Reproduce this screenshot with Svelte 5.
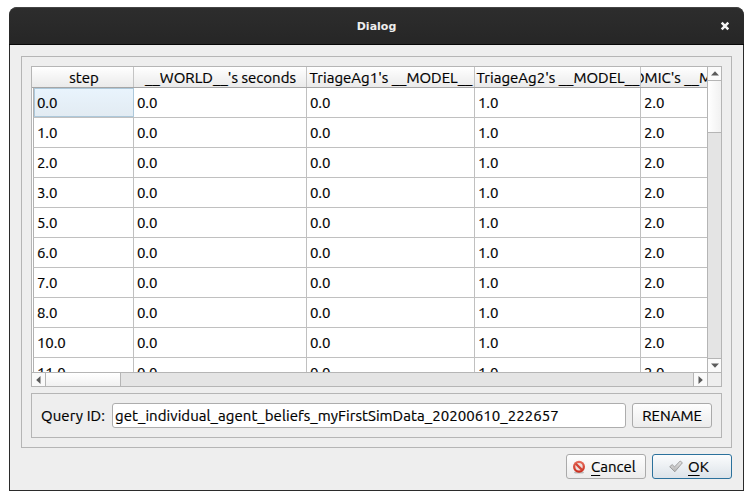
<script>
  const columns = [
    { label: 'step', width: 100, cls: 'step' },
    { label: "__WORLD__'s seconds", width: 173, cls: 'world' },
    { label: "TriageAg1's __MODEL__", width: 168, cls: 'triage' },
    { label: "TriageAg2's __MODEL__", width: 166, cls: 'triage' },
    { label: "ATOMIC's __MODEL__", width: 103, cls: 'atomic' }
  ];
  const steps = ['0.0', '1.0', '2.0', '3.0', '5.0', '6.0', '7.0', '8.0', '10.0', '11.0'];
  const rows = steps.map((s) => [s, '0.0', '0.0', '1.0', '2.0']);
</script>

<div class="window">
  <header class="titlebar">
    <span class="title">Dialog</span>
    <svg class="close" width="10" height="10" viewBox="0 0 10 10"><path d="M1.7 1.7 8.3 8.3M8.3 1.7 1.7 8.3" stroke="#f4f4f4" stroke-width="2.5" /></svg>
  </header>
  <main>
    <section class="group">
      <div class="table">
        <div class="upper">
          <div class="viewport">
            <div class="head">
              {#each columns as c}
                <div class="th" style="width:{c.width}px"><span class={c.cls}>{c.label}</span></div>
              {/each}
            </div>
            <div class="body">
              {#each rows as row, r}
                <div class="row">
                  {#each row as value, i}
                    <div class="td" class:current={r === 0 && i === 0} style="width:{columns[i].width}px">{value}</div>
                  {/each}
                </div>
              {/each}
            </div>
          </div>
          <div class="vscroll">
            <div class="arrow up"><svg width="8" height="5" viewBox="0 0 8 5"><path d="M0 4.5 4 0.2 8 4.5z" fill="#5a5a5a" /></svg></div>
            <div class="vthumb"></div>
            <div class="track"></div>
            <div class="arrow down"><svg width="8" height="5" viewBox="0 0 8 5"><path d="M0 0.5 4 4.8 8 0.5z" fill="#5a5a5a" /></svg></div>
          </div>
        </div>
        <div class="hscroll">
          <div class="arrow left"><svg width="5" height="8" viewBox="0 0 5 8"><path d="M4.5 0 0.2 4 4.5 8z" fill="#5a5a5a" /></svg></div>
          <div class="hthumb"></div>
          <div class="track"></div>
          <div class="arrow right"><svg width="5" height="8" viewBox="0 0 5 8"><path d="M0.5 0 4.8 4 0.5 8z" fill="#5a5a5a" /></svg></div>
          <div class="corner"></div>
        </div>
      </div>
      <div class="query">
        <span class="label">Query ID:</span>
        <div class="field"><span>get_individual_agent_beliefs_myFirstSimData_20200610_222657</span></div>
        <button class="btn rename"><span>RENAME</span></button>
      </div>
    </section>
    <footer>
      <button class="btn cancel">
        <svg width="14" height="14" viewBox="0 0 14 14">
          <defs><linearGradient id="red" x1="0" y1="0" x2="0" y2="1"><stop offset="0" stop-color="#e8705f" /><stop offset="1" stop-color="#c92a1b" /></linearGradient></defs>
          <ellipse cx="7" cy="12.4" rx="5" ry="1.2" fill="#bbb" />
          <circle cx="7" cy="6.7" r="6" fill="url(#red)" />
          <circle cx="7" cy="6.7" r="3.7" fill="#eee0dd" />
          <path d="M3.8 3.8 10 9.9" stroke="#d34435" stroke-width="2.3" />
        </svg>
        <span><u>C</u>ancel</span>
      </button>
      <button class="btn ok">
        <svg width="14" height="13" viewBox="0 0 14 13">
          <defs><linearGradient id="grey" x1="0" y1="0" x2="0" y2="1"><stop offset="0" stop-color="#e4e4e4" /><stop offset="1" stop-color="#b4b4b4" /></linearGradient></defs>
          <path d="M.7 6.7 3.2 4.6 5.5 6.9 11.2 1 13.4 2.8 5.8 11.8z" fill="url(#grey)" stroke="#8f8f8f" stroke-width=".8" stroke-linejoin="round" />
        </svg>
        <span><u>O</u>K</span>
      </button>
    </footer>
  </main>
</div>

<style>
  :global(body) { background: #fff; }
  * { box-sizing: border-box; }
  .window {
    width: 735px; height: 484px; margin: 7px 0 0 9px;
    display: flex; flex-direction: column;
    border-radius: 8px 8px 0 0; overflow: hidden; background: #2b2b2b;
    font: 15px/20px Ubuntu, "Noto Sans", sans-serif; color: #000; white-space: nowrap;
  }
  svg { display: block; flex: none; }
  .titlebar {
    height: 38px; flex: none; display: grid; grid-template-columns: 1fr auto 1fr; align-items: center;
    background: linear-gradient(#2d2d2d, #262626); border-top: 1px solid #444; border-bottom: 1px solid #080808;
    border-radius: 8px 8px 0 0; padding-right: 14px; padding-left: 14px;
  }
  .title { grid-column: 2; color: #eee; font: bold 11px/16px "DejaVu Sans", sans-serif; padding-top: 2px; }
  .close { justify-self: end; }
  main { flex: 1; margin: 0 1px 1px; padding: 11px; background: #eee; -webkit-text-stroke: 0.2px #000; }
  .group { width: 711px; height: 392px; border: 1px solid #b5b5b5; padding: 9px; display: flex; flex-direction: column; gap: 6px; }
  .table { height: 321px; border: 1px solid #b5b5b5; display: flex; flex-direction: column; }
  .upper { height: 305px; display: flex; }
  .viewport { width: 675px; height: 305px; overflow: hidden; background: #fff; }
  .head { height: 21px; display: flex; padding-left: 2px; border-bottom: 1px solid #a5a5a5; background: linear-gradient(#fff, #eaeaea); }
  .th { flex: none; display: flex; justify-content: center; align-items: center; overflow: hidden; border-right: 1px solid #c4c4c4; height: 20px; padding: 2px 0 0 1px; }
  .th span { flex: none; }
  .th .world { letter-spacing: 0.03px; }
  .th .atomic { margin-right: 4px; }
  .body { padding-left: 1px; }
  .row { display: flex; height: 30px; border-bottom: 1px solid #c0c0c0; width: 720px; border-left: 1px solid #b2b2b2; }
  .td { flex: none; height: 29px; border-right: 1px solid #c0c0c0; padding: 5px 0 0 3px; letter-spacing: -0.1px; }
  .current { background: linear-gradient(#e9f4fd, #e2ebf2); outline: 1px solid #adc8da; outline-offset: -1px; }
  .vscroll { width: 14px; display: flex; flex-direction: column; border-left: 1px solid #b5b5b5; }
  .arrow { background: #fafafa; display: flex; justify-content: center; align-items: center; flex: none; }
  .up { height: 14px; border-bottom: 1px solid #b5b5b5; }
  .down { height: 14px; border-top: 1px solid #b5b5b5; }
  .vthumb { height: 52px; flex: none; background: linear-gradient(90deg, #fff, #f1f1f1); border-bottom: 1px solid #b5b5b5; }
  .track { flex: 1; background: #e4e4e4; }
  .hscroll { height: 14px; border-top: 1px solid #b5b5b5; display: flex; }
  .left { width: 14px; border-right: 1px solid #b5b5b5; }
  .hthumb { width: 75px; background: linear-gradient(#fff, #f1f1f1); border-right: 1px solid #b5b5b5; }
  .right { width: 14px; border-left: 1px solid #b5b5b5; }
  .corner { width: 14px; border-left: 1px solid #b5b5b5; background: #eee; }
  .query { height: 45px; border: 1px solid #b5b5b5; padding: 9px; display: flex; }
  .label { width: 71px; line-height: 25px; letter-spacing: 0.08px; }
  .field { width: 514px; height: 25px; border: 1px solid #adadad; border-radius: 3px; background: #fff; padding: 0 2px; line-height: 23px; letter-spacing: 0.06px; }
  .btn {
    width: 80px; height: 25px; border: 1px solid #aaa; border-radius: 3px; padding: 0; margin: 0;
    background: linear-gradient(#fefefe, #ececec); font: inherit; color: #000;
    display: flex; align-items: center; justify-content: center;
  }
  .rename { margin-left: 6px; }
  footer { display: flex; justify-content: flex-end; gap: 6px; padding-top: 6px; width: 711px; }
  .cancel { justify-content: flex-start; padding-left: 5px; gap: 5px; }
  .ok { justify-content: flex-start; padding-left: 16px; gap: 5px; border-color: #2b719c; background: linear-gradient(#fbfcfd, #dce3e9); }
  u { text-decoration: underline; text-underline-offset: 3px; text-decoration-thickness: 1px; text-decoration-skip-ink: none; }
</style>
